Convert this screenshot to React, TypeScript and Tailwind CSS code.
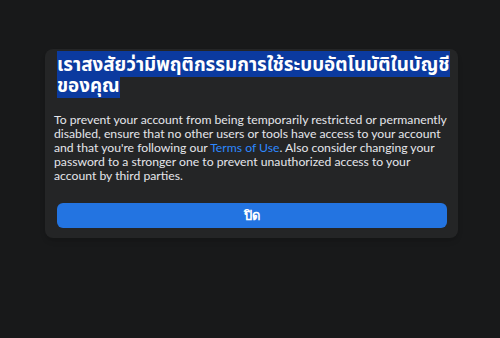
import React from 'react';

const App: React.FC = () => {
  return (
    <div className="w-[500px] h-[338px] bg-[#18191a] pt-[49px] font-['Lato',sans-serif]">
      <div className="ml-[45px] w-[413px] rounded-lg bg-[#242526] pl-[9px] pr-3 pt-[5px] pb-[10px] shadow-md">
        <h2 className="ml-[3px] whitespace-nowrap text-[18.8px] font-bold leading-[21px] text-white font-['Noto_Sans','Noto_Sans_Thai',sans-serif]">
          <span className="bg-[#0b3a9f]">
            เราสงสัยว่ามีพฤติกรรมการใช้ระบบอัตโนมัติในบัญชี
            <br />
            ของคุณ
          </span>
        </h2>
        <p className="mt-[17px] whitespace-nowrap text-[12.2px] leading-[14px] text-[#e4e6eb]">
          To prevent your account from being temporarily restricted or permanently
          <br />
          disabled, ensure that no other users or tools have access to your account
          <br />
          and that you're following our{' '}
          <a href="#" className="text-[#2d88ff]">
            Terms of Use
          </a>
          . Also consider changing your
          <br />
          password to a stronger one to prevent unauthorized access to your
          <br />
          account by third parties.
        </p>
        <button className="ml-[3px] mt-[20px] h-[25px] w-[390px] rounded-md bg-[#2374e1] text-[13px] font-bold text-white">
          ปิด
        </button>
      </div>
    </div>
  );
};

export default App;
